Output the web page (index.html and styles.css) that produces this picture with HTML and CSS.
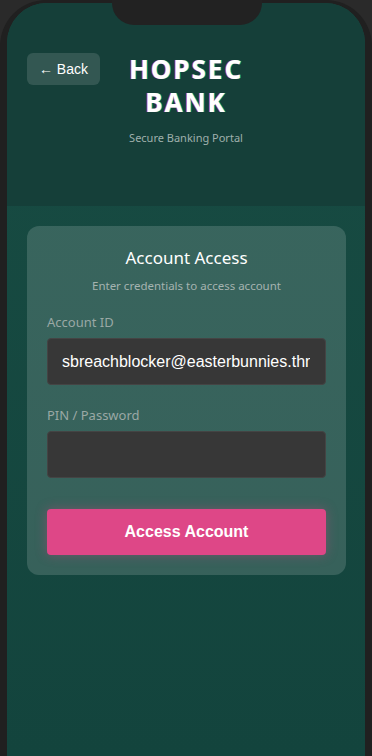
FILE: index.html
```html
<!DOCTYPE html>
<html lang="en">
<head>
  <meta charset="UTF-8">
  <meta name="viewport" content="width=device-width, initial-scale=1">
  <title>HopSec Bank</title>
  <link rel="stylesheet" href="styles.css">
</head>
<body>
  <div class="phone">
    <div class="notch"></div>
    <div class="screen">
      <header class="header">
        <a href="#" class="back-btn">&larr; Back</a>
        <div class="brand">
          <h1 class="logo">HOPSEC<br>BANK</h1>
          <p class="tagline">Secure Banking Portal</p>
        </div>
      </header>
      <main class="content">
        <form class="card">
          <h2>Account Access</h2>
          <p class="hint">Enter credentials to access account</p>
          <div class="field">
            <label for="accountId">Account ID</label>
            <input type="text" id="accountId" value="sbreachblocker@easterbunnies.thm">
          </div>
          <div class="field">
            <label for="pin">PIN / Password</label>
            <input type="password" id="pin">
          </div>
          <button type="submit" class="submit-btn">Access Account</button>
        </form>
      </main>
    </div>
  </div>
</body>
</html>
```

FILE: styles.css
```css
* {
  margin: 0;
  padding: 0;
  box-sizing: border-box;
}

body {
  font-family: 'Noto Sans', 'Open Sans', sans-serif;
  background: #2a2a2a;
  height: 756px;
  overflow: hidden;
}

.phone {
  position: relative;
  height: 100%;
  background: #202020;
  border-radius: 46px 46px 0 0;
  padding: 3px 7px 0;
}

.notch {
  position: absolute;
  top: 0;
  left: 112px;
  width: 150px;
  height: 25px;
  background: #222;
  border-radius: 0 0 22px 22px;
  z-index: 2;
}

.screen {
  height: 100%;
  border-radius: 40px 40px 0 0;
  overflow: hidden;
  background: linear-gradient(180deg, #184c43 0%, #13443d 100%);
  display: flex;
  flex-direction: column;
}

.header {
  height: 203px;
  background: #153f39;
  display: flex;
  justify-content: center;
  position: relative;
  padding-top: 50px;
}

.back-btn {
  position: absolute;
  left: 20px;
  top: 50px;
  width: 73px;
  height: 32px;
  display: flex;
  align-items: center;
  justify-content: center;
  background: rgba(255, 255, 255, 0.13);
  border-radius: 6px;
  color: #fff;
  text-decoration: none;
  font-family: 'Liberation Sans', Arial, sans-serif;
  font-size: 14px;
}

.brand {
  text-align: center;
}

.logo {
  color: #fff;
  font-size: 26px;
  font-weight: 700;
  line-height: 33px;
  letter-spacing: 2px;
  text-shadow: -1px 0 rgba(255, 60, 120, 0.7), 1px 0 rgba(0, 255, 230, 0.6);
}

.tagline {
  margin-top: 11px;
  color: #9fb0ac;
  font-size: 11px;
}

.content {
  padding: 20px 19px 20px 20px;
}

.card {
  background: rgba(255, 255, 255, 0.15);
  border-radius: 12px;
  padding: 20px 20px 20px;
  text-align: center;
}

.card h2 {
  color: #fff;
  font-size: 17px;
  font-weight: 400;
  line-height: 24px;
}

.hint {
  margin-top: 8px;
  color: #a5b3b0;
  font-size: 11.5px;
}

.field {
  text-align: left;
  margin-top: 20px;
}

.field + .field {
  margin-top: 21px;
}

.field label {
  display: block;
  color: #9aa8a5;
  font-size: 13px;
  margin-bottom: 7px;
}

.field input {
  width: 100%;
  height: 47px;
  background: #373737;
  border: 1px solid #444;
  border-radius: 4px;
  padding: 0 15px 0 14px;
  color: #fff;
  font-family: 'Liberation Sans', Arial, sans-serif;
  font-size: 16px;
  outline: none;
}

.submit-btn {
  display: block;
  width: 100%;
  height: 46px;
  margin-top: 31px;
  background: #de4787;
  border: none;
  border-radius: 4px;
  color: #fff;
  font-family: 'Liberation Sans', Arial, sans-serif;
  font-size: 16px;
  font-weight: 700;
  box-shadow: 0 0 12px rgba(222, 71, 135, 0.35);
  cursor: pointer;
}
```
